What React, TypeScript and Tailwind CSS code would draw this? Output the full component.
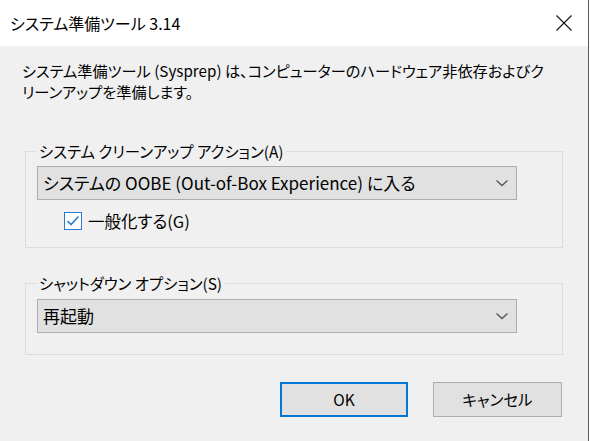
import React from 'react';

const ComboBox: React.FC<{ value: string }> = ({ value }) => (
  <div className="ml-[11px] flex h-[34px] w-[480px] items-center justify-between border border-[#adadad] bg-[#e1e1e1] pl-[5px] pr-[6px] text-[17px] text-black">
    <span className="whitespace-nowrap">{value}</span>
    <svg width="14" height="8" viewBox="0 0 14 8" className="mr-[1px]">
      <path d="M1.5 1.5 L7 6.5 L12.5 1.5" fill="none" stroke="#555" strokeWidth="1.3" />
    </svg>
  </div>
);

const GroupBox: React.FC<{ label: string; className?: string; children: React.ReactNode }> = ({
  label,
  className,
  children,
}) => (
  <fieldset className={`ml-[25px] w-[538px] border border-[#dcdcdc] ${className ?? ''}`}>
    <legend className="ml-[10px] px-[3px] text-[15.4px] leading-[20px] text-black">{label}</legend>
    {children}
  </fieldset>
);

export default function App() {
  return (
    <div className="h-[441px] w-[591px] bg-white font-['Noto_Sans_CJK_JP','Noto_Sans',sans-serif] [font-feature-settings:'palt']">
      <div className="flex h-full w-[589px] flex-col border-r border-[#5a5a5a] bg-[#f0f0f0]">
        {/* title bar */}
        <div className="flex h-[46px] shrink-0 items-center justify-between bg-white pl-[10px] pr-[16px]">
          <span className="text-[16px] text-black">システム準備ツール 3.14</span>
          <svg width="16" height="16" viewBox="0 0 16 16">
            <path d="M0.5 0.5 L15.5 15.5 M15.5 0.5 L0.5 15.5" stroke="#111" strokeWidth="1.1" fill="none" />
          </svg>
        </div>

        <p className="pl-[22px] pt-[14px] text-[15.2px] leading-[21px] text-black">
          システム準備ツール (Sysprep) は、コンピューターのハードウェア非依存およびク
          <br />
          リーンアップを準備します。
        </p>

        <GroupBox label="システム クリーンアップ アクション(A)" className="mt-[39px] pb-[16px]">
          <div className="mt-[5px]">
            <ComboBox value="システムの OOBE (Out-of-Box Experience) に入る" />
          </div>
          <label className="ml-[38px] mt-[11px] flex items-center gap-[6px] text-[16.5px] leading-[20px] text-black">
            <span className="flex h-[18px] w-[18px] items-center justify-center border border-[#2a7ad5] bg-white">
              <svg width="14" height="12" viewBox="0 0 14 12">
                <path d="M1.5 6 L5 9.5 L12.5 1.5" fill="none" stroke="#2a7ad5" strokeWidth="1.6" />
              </svg>
            </span>
            一般化する(G)
          </label>
        </GroupBox>

        <GroupBox label="シャットダウン オプション(S)" className="mt-[25px] pb-[21px]">
          <div className="mt-[6px]">
            <ComboBox value="再起動" />
          </div>
        </GroupBox>

        <div className="mt-[27px] flex justify-end gap-[25px] pr-[26px]">
          <button className="h-[35px] w-[128px] border-2 border-[#0078d7] bg-[#e1e1e1] text-[15.5px] text-black">
            OK
          </button>
          <button className="h-[35px] w-[129px] border border-[#adadad] bg-[#e1e1e1] text-[15.5px] text-black">
            キャンセル
          </button>
        </div>
      </div>
    </div>
  );
}
